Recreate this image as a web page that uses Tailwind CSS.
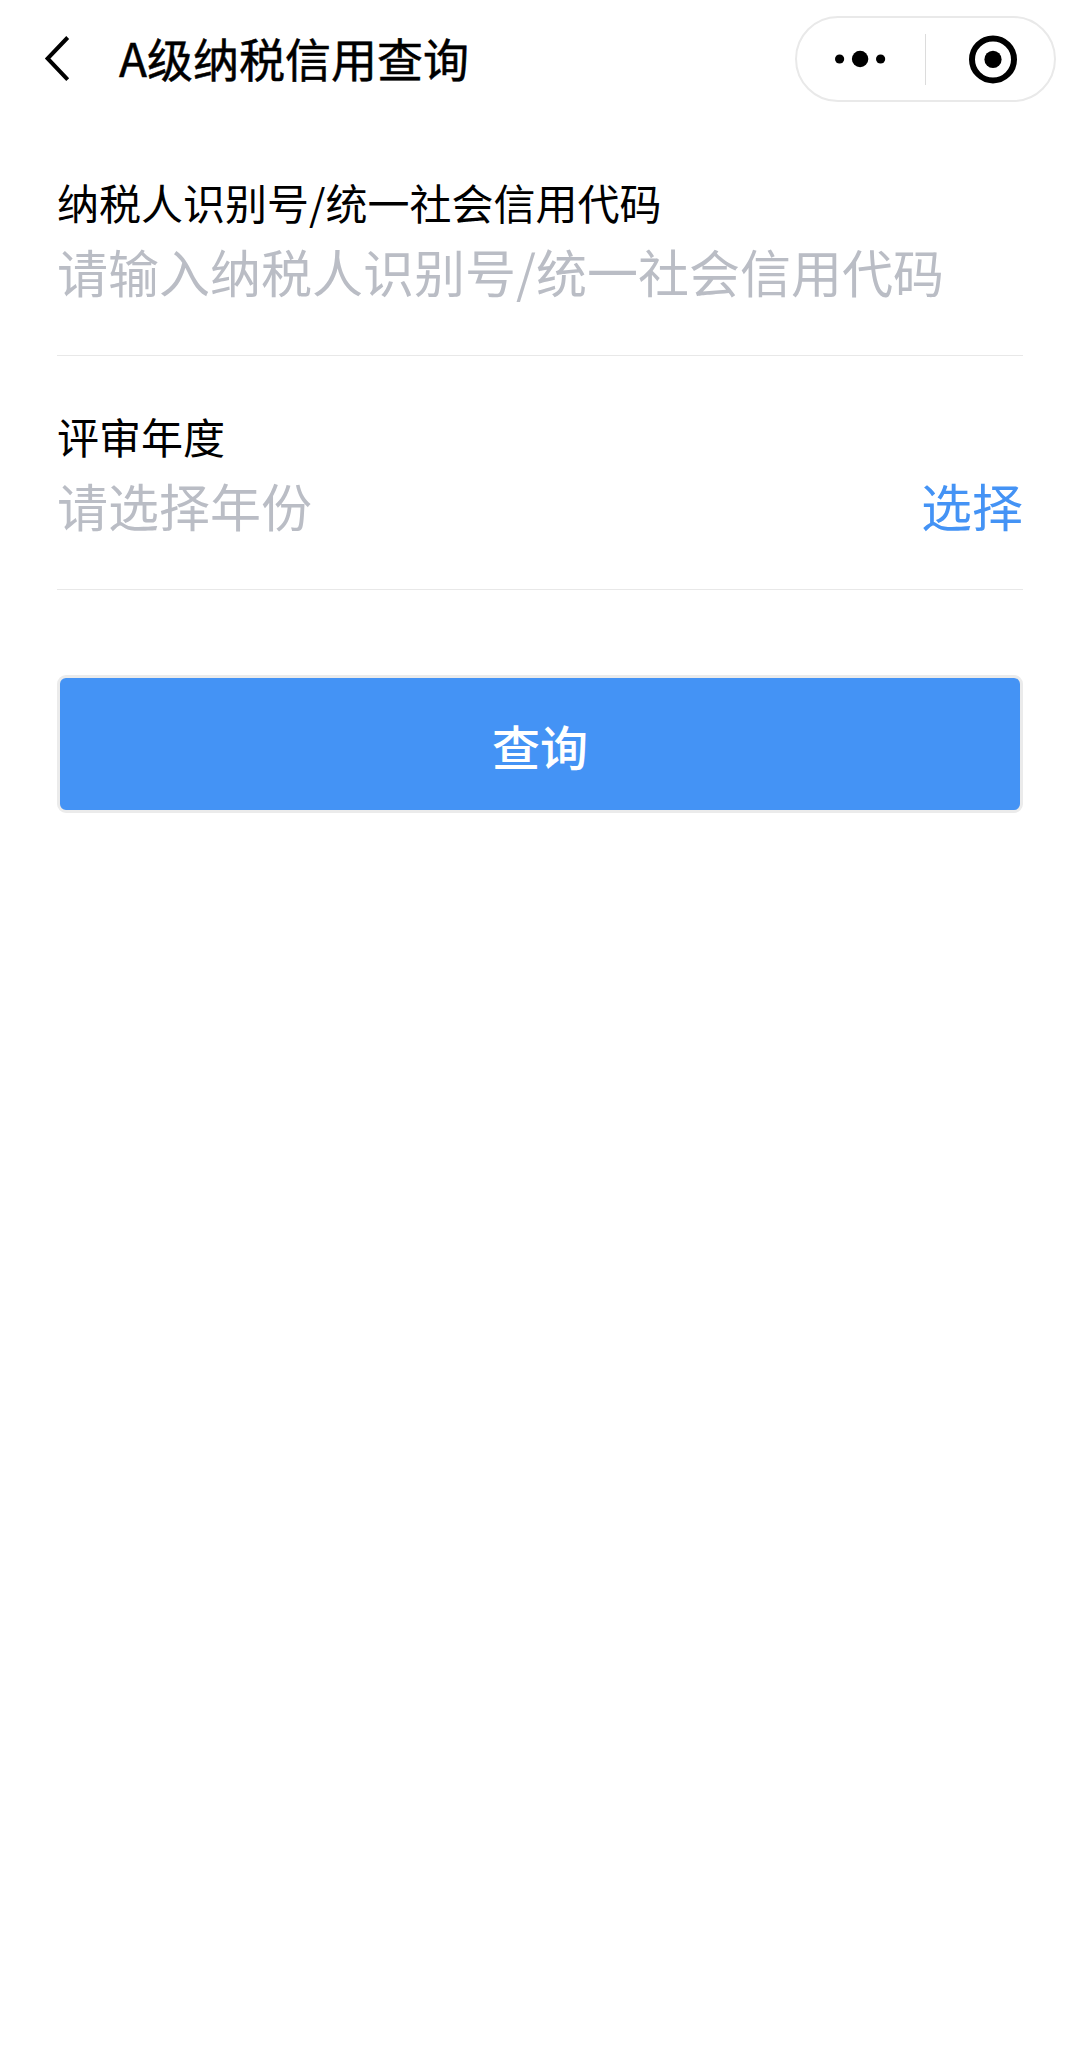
<!DOCTYPE html>
<html lang="zh-CN">
<head>
  <meta charset="UTF-8" />
  <title>A级纳税信用查询</title>
  <script src="https://cdn.jsdelivr.net/npm/@tailwindcss/browser@4"></script>
</head>
<body class="bg-white min-h-screen font-['Noto_Sans_CJK_SC',sans-serif] text-black">
  <header class="flex items-center h-[118px] pl-[44px] pr-[24px]">
    <svg class="w-[27px] h-[46px]" viewBox="0 0 27 46" fill="none" stroke="#000" stroke-width="4">
      <path d="M23.7 1.5 3.6 22.5l20.1 21.2" />
    </svg>
    <h1 class="ml-[48px] pb-[5px] text-[46px] leading-[60px] font-normal [-webkit-text-stroke:0.5px]">A级纳税信用查询</h1>
    <div class="ml-auto flex items-center w-[261px] h-[86px] rounded-full border-2 border-[#e9e9e9]">
      <button class="w-[128px] flex justify-center">
        <svg class="w-[52px] h-[18px]" viewBox="0 0 52 18">
          <circle cx="4.6" cy="9" r="4.6" /><circle cx="25.1" cy="9" r="8.2" /><circle cx="45.6" cy="9" r="4.6" />
        </svg>
      </button>
      <span class="w-px h-[51px] bg-[#dcdcdc]"></span>
      <button class="flex-1 pl-[6px] flex justify-center">
        <svg class="w-[50px] h-[50px]" viewBox="0 0 50 50">
          <circle cx="25" cy="25.4" r="21" fill="none" stroke="#000" stroke-width="6" /><circle cx="25" cy="25.4" r="8.6" />
        </svg>
      </button>
    </div>
  </header>

  <main class="px-[57px]">
    <div class="h-[238px] border-b border-[#e8e8e8] pt-[58px]">
      <label class="block text-[42px] leading-[52px]">纳税人识别号/统一社会信用代码</label>
      <p class="mt-[11px] text-[51px] leading-[64px] text-[#babdc5]">请输入纳税人识别号/统一社会信用代码</p>
    </div>
    <div class="h-[234px] border-b border-[#e8e8e8] pt-[54px]">
      <label class="block text-[42px] leading-[52px]">评审年度</label>
      <div class="mt-[11px] flex justify-between text-[51px] leading-[64px]">
        <span class="text-[#babdc5]">请选择年份</span>
        <a class="text-[#4493f5]">选择</a>
      </div>
    </div>
    <button class="mt-[85px] w-full h-[138px] pt-[2px] rounded-[9px] border-3 border-[#ebebeb] bg-[#4493f5] text-white text-[48px] font-medium">查询</button>
  </main>
</body>
</html>
